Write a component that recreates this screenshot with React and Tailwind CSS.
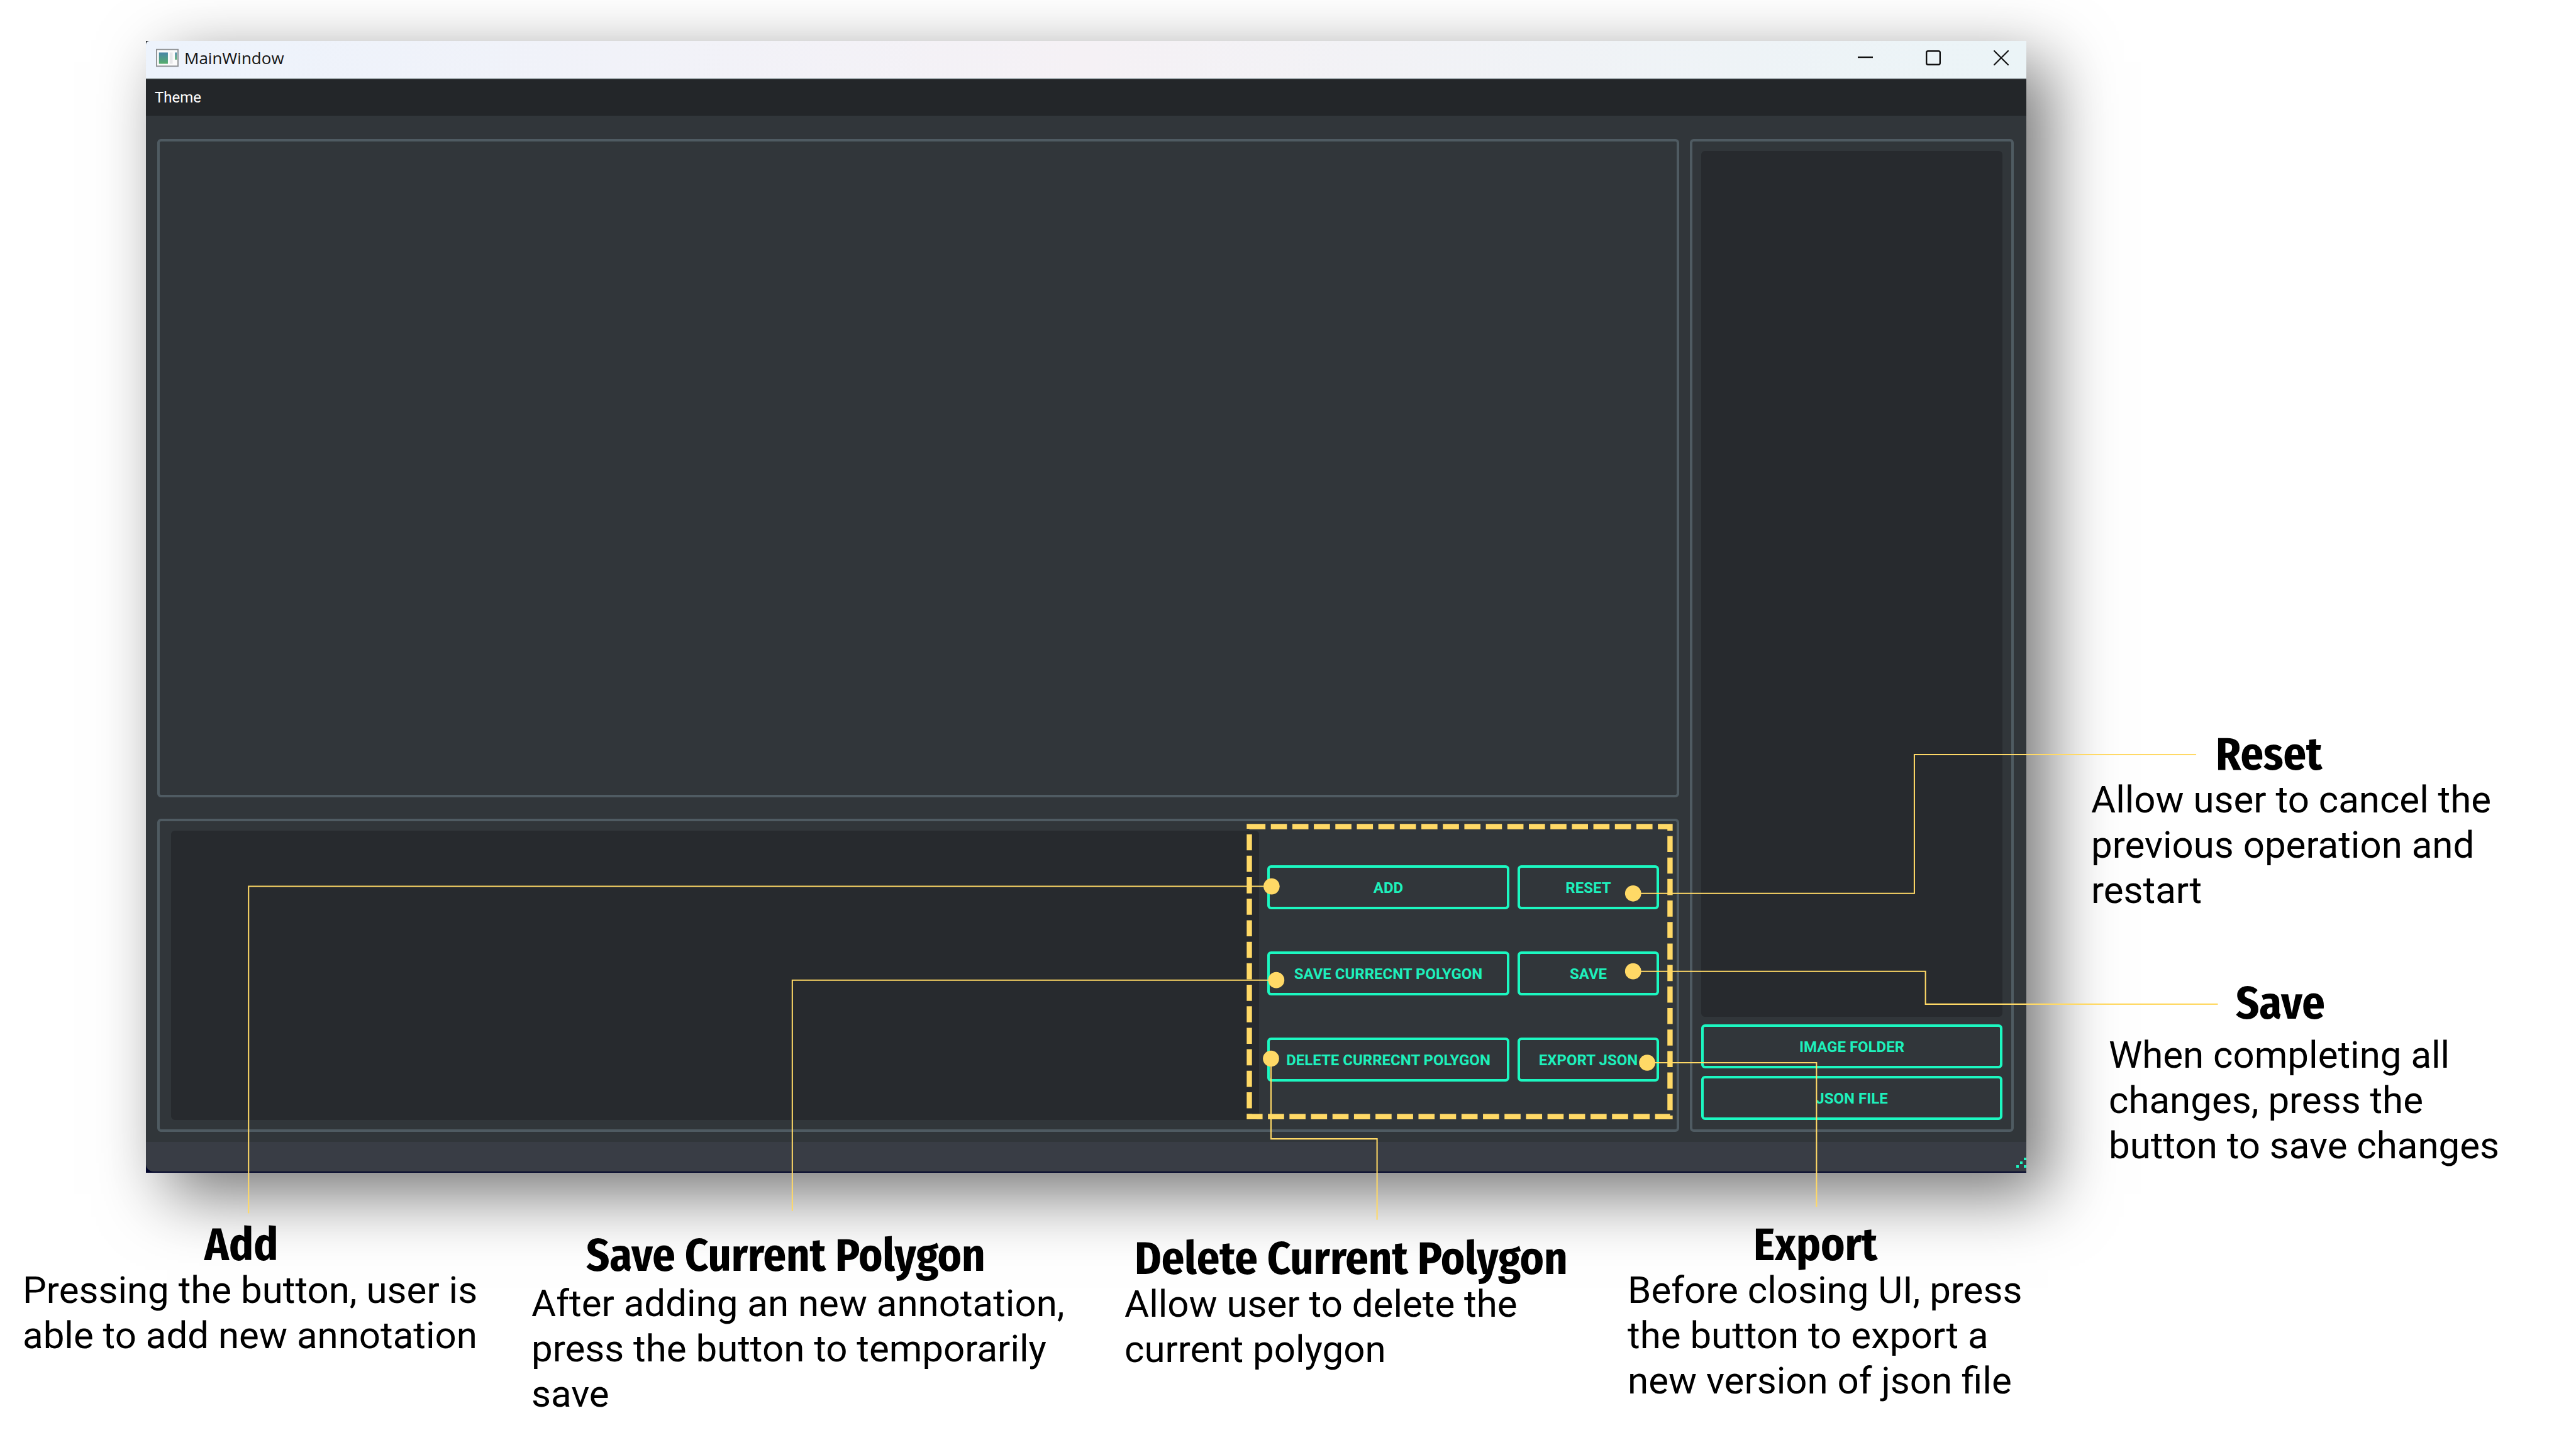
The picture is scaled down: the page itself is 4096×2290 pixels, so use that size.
const SHELL_BUTTON =
  "h-[70px] w-full rounded-md border-4 border-[#1cf8c1] bg-transparent pt-0.5 font-[Roboto,sans-serif] text-2xl leading-none font-bold text-[#1ef0bc] uppercase";

function ActionButton({ children }) {
  return (
    <button type="button" className={SHELL_BUTTON}>
      {children}
    </button>
  );
}

function TitleBar() {
  return (
    <header className="flex h-[61px] items-start justify-between rounded-tl-md border-b-2 border-[#a9b2b6] bg-linear-to-r from-[#edf3fc] via-[#f5f1f5] to-[#ebf4f7]">
      <div className="flex h-[54px] items-center gap-[9px] pl-4">
        <svg className="h-[30px] w-9" viewBox="0 0 38 30" aria-hidden="true">
          <defs>
            <linearGradient id="app-tile" x1="0" y1="0" x2="0" y2="1">
              <stop offset="0" stopColor="#4a86a8" />
              <stop offset="1" stopColor="#55ad6b" />
            </linearGradient>
          </defs>
          <rect x="1" y="1" width="36" height="28" fill="#fbfbfb" stroke="#8f9295" strokeWidth="2" />
          <rect x="5" y="6" width="15" height="19" fill="url(#app-tile)" />
          <rect x="23" y="6" width="5" height="19" fill="#e8e8ea" />
          <rect x="32" y="6" width="3" height="12" fill="url(#app-tile)" />
        </svg>
        <h1 className="font-['Open_Sans',sans-serif] text-[26px] leading-9 text-[#151515]">MainWindow</h1>
      </div>
      <div className="flex h-[54px] items-center gap-[84px] pr-7 text-[#111]">
        <button type="button" aria-label="Minimize" className="size-6">
          <svg viewBox="0 0 24 24" fill="none" stroke="currentColor" strokeWidth="2.4">
            <path d="M0 11h24" />
          </svg>
        </button>
        <button type="button" aria-label="Maximize" className="size-6">
          <svg viewBox="0 0 24 24" fill="none" stroke="currentColor" strokeWidth="2.4">
            <rect x="1.2" y="1.2" width="21.6" height="21.6" rx="2.5" />
          </svg>
        </button>
        <button type="button" aria-label="Close" className="size-6">
          <svg viewBox="0 0 24 24" fill="none" stroke="currentColor" strokeWidth="2.2" strokeLinecap="round">
            <path d="M1 1l22 22M23 1L1 23" />
          </svg>
        </button>
      </div>
    </header>
  );
}

function MainWindow() {
  return (
    <main className="mt-[65px] ml-[232px] flex flex-1 flex-col bg-[#31363a] shadow-[34px_34px_100px_rgba(0,0,0,0.55)]">
      <TitleBar />
      <nav className="flex h-[58px] items-center bg-[#232629] pl-3.5">
        <button type="button" className="font-[Roboto,sans-serif] text-2xl leading-none text-white">
          Theme
        </button>
      </nav>

      <div className="flex flex-1 gap-[17px] px-5 pt-[37px] pb-4 pl-[18px]">
        <div className="flex flex-1 flex-col gap-[34px]">
          <section aria-label="Canvas" className="flex-1 rounded-md border-4 border-[#4f5b62]" />
          <section
            aria-label="Annotations"
            className="flex h-[498px] gap-[13px] rounded-md border-4 border-[#4f5b62] py-[15px] pr-7 pl-[18px]"
          >
            <div className="flex-1 rounded-md bg-[#272a2e]" />
            <div className="grid w-[623px] grid-cols-[385fr_225fr] content-start gap-x-[13px] gap-y-[67px] pt-[55px]">
              <ActionButton>Add</ActionButton>
              <ActionButton>Reset</ActionButton>
              <ActionButton>Save currecnt polygon</ActionButton>
              <ActionButton>Save</ActionButton>
              <ActionButton>Delete currecnt polygon</ActionButton>
              <ActionButton>Export json</ActionButton>
            </div>
          </section>
        </div>
        <section
          aria-label="Files"
          className="flex w-[515px] flex-col gap-3 rounded-md border-4 border-[#4f5b62] px-[14px] py-[15px]"
        >
          <div className="flex-1 rounded-md bg-[#272a2e]" />
          <ActionButton>Image folder</ActionButton>
          <ActionButton>Json file</ActionButton>
        </section>
      </div>

      <footer className="h-[49px] bg-[#02062a] pb-0.5">
        <div className="flex h-full items-end justify-end rounded-bl-xl bg-[#393d45] pb-1">
          <svg className="size-5 text-[#1cf8c1]" viewBox="0 0 20 20" fill="currentColor" aria-hidden="true">
            <rect x="16" y="2" width="4" height="4" />
            <rect x="10" y="8" width="4" height="4" />
            <rect x="4" y="14" width="4" height="4" />
            <rect x="16" y="14" width="4" height="4" />
          </svg>
        </div>
      </footer>
    </main>
  );
}

function Callout({ title, text, className, titleClass, textClass }) {
  return (
    <article className={className}>
      <h2
        className={`font-['Fira_Sans_Condensed',Roboto,sans-serif] text-[72px] leading-[72px] font-bold whitespace-nowrap ${titleClass}`}
      >
        {title}
      </h2>
      <p className={`font-[Roboto,sans-serif] text-[60px] leading-[72px] ${textClass}`}>{text}</p>
    </article>
  );
}

const CONNECTORS = [
  { dot: [2170, 1513], path: "M2170 1513H424V2071" },
  { dot: [2178, 1673], path: "M2178 1673H1352V2067" },
  { dot: [2169, 1807], path: "M2169 1807V1944H2350V2082" },
  { dot: [2787, 1525], path: "M2787 1525H3267V1288H3748" },
  { dot: [2787, 1658], path: "M2787 1658H3286V1714H3785" },
  { dot: [2811, 1814], path: "M2811 1814H3100V2060" },
];

function Connectors() {
  return (
    <svg
      className="pointer-events-none absolute inset-0 size-full"
      viewBox="0 0 4396 2458"
      fill="none"
      stroke="#ffd966"
      aria-hidden="true"
    >
      <rect x="2132" y="1411" width="718" height="495" strokeWidth="9" strokeDasharray="27.5 9.2" />
      {CONNECTORS.map(({ dot, path }) => (
        <g key={path}>
          <path d={path} strokeWidth="2.2" />
          <circle cx={dot[0]} cy={dot[1]} r="13.8" fill="#ffd966" stroke="none" />
        </g>
      ))}
    </svg>
  );
}

export default function App() {
  return (
    <div className="relative flex min-h-screen flex-col bg-white text-black">
      <div className="flex flex-1">
        <MainWindow />
        <aside className="relative flex w-[874px] flex-col gap-[108px] pt-[1164px]">
          <Callout
            title="Reset"
            text="Allow user to cancel the previous operation and restart"
            className="pl-[103px]"
            titleClass="pl-[198px]"
            textClass="max-w-[660px]"
          />
          <Callout
            title="Save"
            text="When completing all changes, press the button to save changes"
            className="pl-[131px]"
            titleClass="pl-[202px]"
            textClass="mt-2.5 max-w-[660px]"
          />
        </aside>
      </div>
      <section className="relative grid h-[425px] grid-cols-[809fr_943fr_800fr_1508fr] pl-9">
        <Callout
          title="Add"
          text="Pressing the button, user is able to add new annotation"
          className="pt-[79px]"
          titleClass="pl-[289px]"
          textClass="max-w-[760px]"
        />
        <Callout
          title="Save Current Polygon"
          text="After adding an new annotation, press the button to temporarily save"
          className="pt-24"
          titleClass="pl-[87px]"
          textClass="mt-1 max-w-[870px]"
        />
        <Callout
          title="Delete Current Polygon"
          text="Allow user to delete the current polygon"
          className="pt-[101px]"
          titleClass="pl-4"
          textClass="max-w-[680px]"
        />
        <Callout
          title="Export"
          text="Before closing UI, press the button to export a new version of json file"
          className="pt-[79px]"
          titleClass="pl-[200px]"
          textClass="max-w-[650px]"
        />
      </section>
      <Connectors />
    </div>
  );
}
